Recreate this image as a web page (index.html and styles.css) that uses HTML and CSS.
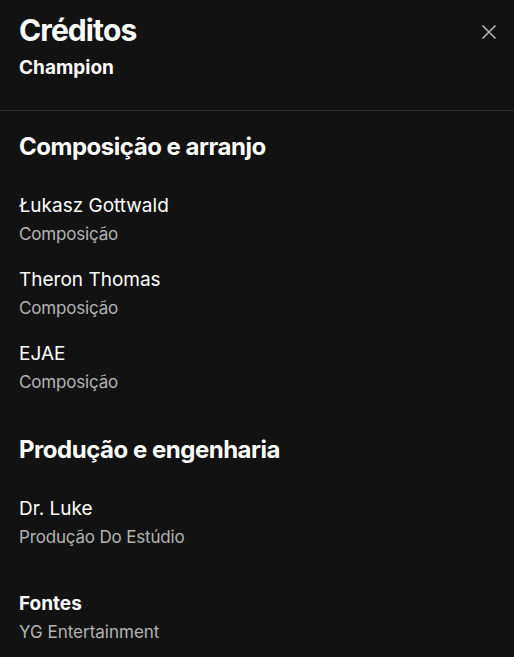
FILE: index.html
```html
<!DOCTYPE html>
<html lang="pt">
<head>
    <meta charset="UTF-8">
    <meta name="viewport" content="width=device-width, initial-scale=1.0">
    <title>Créditos</title>
    <link rel="stylesheet" href="styles.css">
</head>
<body>
    <div class="credits">
        <header class="credits-header">
            <div>
                <h1>Créditos</h1>
                <p class="track">Champion</p>
            </div>
            <button class="close" aria-label="Fechar">
                <svg width="16" height="16" viewBox="0 0 16 16">
                    <path d="M1.5 1.5 L14.5 14.5 M14.5 1.5 L1.5 14.5" stroke="#b3b3b3" stroke-width="1.6" fill="none"/>
                </svg>
            </button>
        </header>

        <section class="group">
            <h2>Composição e arranjo</h2>
            <ul>
                <li><span class="name">Łukasz Gottwald</span><span class="role">Composição</span></li>
                <li><span class="name">Theron Thomas</span><span class="role">Composição</span></li>
                <li><span class="name">EJAE</span><span class="role">Composição</span></li>
            </ul>
        </section>

        <section class="group">
            <h2>Produção e engenharia</h2>
            <ul>
                <li><span class="name">Dr. Luke</span><span class="role">Produção Do Estúdio</span></li>
            </ul>
        </section>

        <div class="sources">
            <h3>Fontes</h3>
            <p>YG Entertainment</p>
        </div>
    </div>
</body>
</html>
```

FILE: styles.css
```css
body {
    margin: 0;
    background-color: #121212;
    color: #ffffff;
    font-family: Inter, "Noto Sans", sans-serif;
}

.credits-header {
    display: flex;
    justify-content: space-between;
    align-items: flex-start;
    height: 111px;
    box-sizing: border-box;
    padding: 12px 9px 0 19px;
    border-bottom: 1px solid #2a2a2a;
}

.credits-header h1 {
    margin: 0;
    font-size: 30px;
    line-height: 36px;
    font-weight: 700;
    letter-spacing: -0.03em;
}

.track {
    margin: 8px 0 0;
    font-size: 19px;
    line-height: 24px;
    font-weight: 700;
}

.close {
    background: none;
    border: none;
    padding: 8px;
    margin-top: 4px;
    cursor: pointer;
}

.group {
    padding: 20px 19px 0;
}

.group + .group {
    padding-top: 38px;
}

.group h2 {
    margin: 0 0 29px;
    font-size: 24px;
    line-height: 32px;
    font-weight: 700;
    letter-spacing: -0.02em;
}

.group ul {
    list-style: none;
    margin: 0;
    padding: 0;
}

.group li {
    display: flex;
    flex-direction: column;
    margin-bottom: 18px;
}

.group li:last-child {
    margin-bottom: 0;
}

.name {
    font-size: 19px;
    line-height: 28px;
}

.role {
    font-size: 17px;
    line-height: 28px;
    letter-spacing: -0.01em;
    color: #b3b3b3;
}

.sources {
    padding: 39px 19px 16px;
}

.sources h3 {
    margin: 0;
    font-size: 19px;
    line-height: 28px;
    font-weight: 700;
}

.sources p {
    margin: 0;
    font-size: 17px;
    line-height: 28px;
    color: #b3b3b3;
}
```
